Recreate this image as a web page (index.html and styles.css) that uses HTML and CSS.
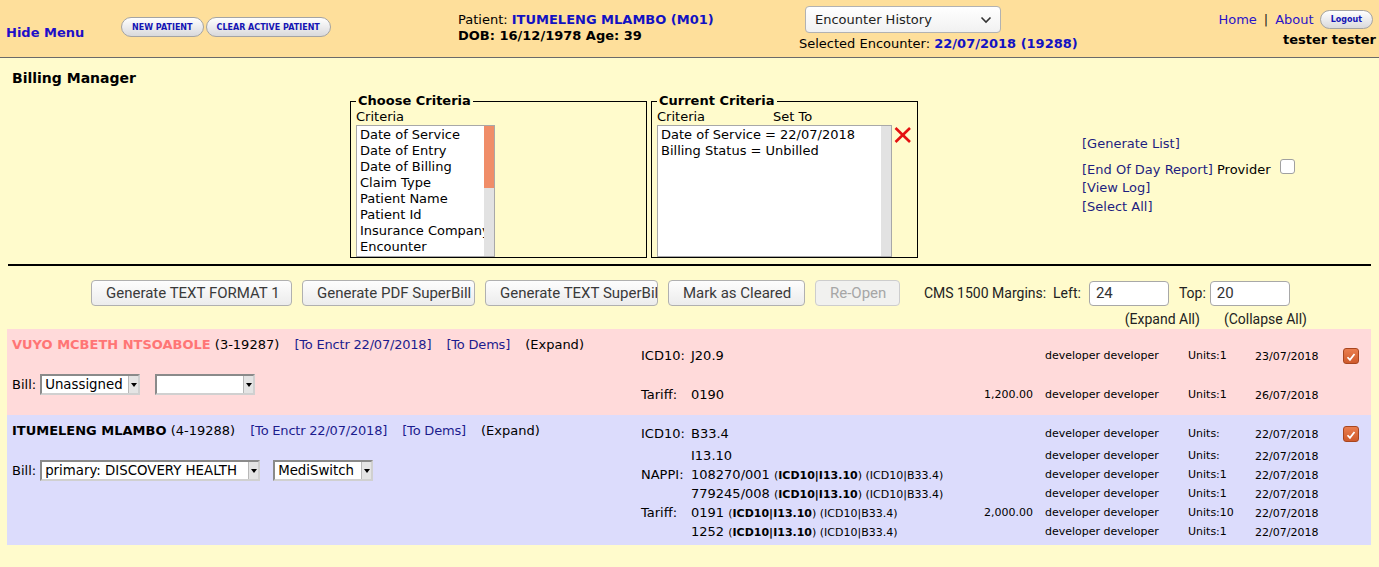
FILE: index.html
```html
<!DOCTYPE html>
<html lang="en">
<head>
    <meta charset="UTF-8">
    <meta name="viewport" content="width=device-width, initial-scale=1.0">
    <title>Billing Manager</title>
    <link rel="stylesheet" href="styles.css">
</head>
<body>
    <div class="topbar">
        <div class="hide-menu"><a href="#">Hide Menu</a></div>
        <div class="top-buttons">
            <button class="pill">NEW PATIENT</button>
            <button class="pill">CLEAR ACTIVE PATIENT</button>
        </div>
        <div class="patient-info">
            <div>Patient: <span class="patient-name">ITUMELENG MLAMBO (M01)</span></div>
            <div class="dob">DOB: 16/12/1978 Age: 39</div>
        </div>
        <div class="encounter">
            <div class="enc-select">
                <span>Encounter History</span>
                <svg width="12" height="8" viewBox="0 0 12 8"><polyline points="1.5,1.5 6,6 10.5,1.5" fill="none" stroke="#333" stroke-width="1.6"/></svg>
            </div>
            <div class="enc-selected">Selected Encounter: <span class="enc-id">22/07/2018 (19288)</span></div>
        </div>
        <div class="user">
            <div class="user-links">
                <a href="#">Home</a><span class="sep">|</span><a href="#">About</a>
                <button class="pill logout">Logout</button>
            </div>
            <div class="user-name">tester tester</div>
        </div>
    </div>

    <div class="title">Billing Manager</div>

    <div class="criteria">
        <fieldset class="choose">
            <legend>Choose Criteria</legend>
            <div class="label">Criteria</div>
            <div class="listbox">
                <div class="options">
                    <div>Date of Service</div>
                    <div>Date of Entry</div>
                    <div>Date of Billing</div>
                    <div>Claim Type</div>
                    <div>Patient Name</div>
                    <div>Patient Id</div>
                    <div>Insurance Company</div>
                    <div>Encounter</div>
                </div>
                <div class="scroll"><div class="thumb"></div></div>
            </div>
        </fieldset>
        <fieldset class="current">
            <legend>Current Criteria</legend>
            <div class="label labels"><span class="col-crit">Criteria</span><span>Set To</span></div>
            <div class="current-body">
                <div class="listbox wide">
                    <div class="options">
                        <div>Date of Service = 22/07/2018</div>
                        <div>Billing Status = Unbilled</div>
                    </div>
                    <div class="scroll"></div>
                </div>
                <svg class="remove" width="20" height="18" viewBox="0 0 20 18">
                    <line x1="2.5" y1="2" x2="17" y2="16" stroke="#e41010" stroke-width="2.6"/>
                    <line x1="17" y1="2" x2="2.5" y2="16" stroke="#e41010" stroke-width="2.6"/>
                </svg>
            </div>
        </fieldset>
        <div class="actions">
            <div class="gen"><a href="#">[Generate List]</a></div>
            <div><a href="#">[End Of Day Report]</a> Provider <span class="box"></span></div>
            <div><a href="#">[View Log]</a></div>
            <div><a href="#">[Select All]</a></div>
        </div>
    </div>

    <div class="rule"></div>

    <div class="toolbar">
        <button class="btn w1">Generate TEXT FORMAT 1</button>
        <button class="btn w2">Generate PDF SuperBill</button>
        <button class="btn w3">Generate TEXT SuperBill</button>
        <button class="btn w4">Mark as Cleared</button>
        <button class="btn w5" disabled>Re-Open</button>
        <span class="margins">CMS 1500 Margins:&nbsp; Left:</span>
        <input class="num" type="text" value="24">
        <span class="margins top-label">Top:</span>
        <input class="num num-top" type="text" value="20">
    </div>
    <div class="expand-links"><span>(Expand All)</span><span>(Collapse All)</span></div>

    <div class="claim pink">
        <div class="claim-left">
            <div class="claim-head">
                <span class="name unbilled">VUYO MCBETH NTSOABOLE</span> (3-19287)
                <a class="gap" href="#">[To Enctr 22/07/2018]</a>
                <a class="gap" href="#">[To Dems]</a>
                <span class="gap">(Expand)</span>
            </div>
            <div class="bill">
                Bill:
                <span class="sel s100"><span class="txt">Unassigned</span><span class="arr"></span></span>
                <span class="sel s100 second"><span class="txt"></span><span class="arr"></span></span>
            </div>
        </div>
        <div class="claim-right tall">
            <div class="line">
                <span class="lbl">ICD10:</span><span class="code">J20.9</span><span class="amt"></span>
                <span class="prov">developer developer</span><span class="units">Units:1</span><span class="date">23/07/2018</span>
                <span class="chk"><svg width="16" height="16" viewBox="0 0 16 16"><path d="M4 8.3 L6.8 11.2 L12 4.6" fill="none" stroke="#fff" stroke-width="2"/></svg></span>
            </div>
            <div class="line">
                <span class="lbl">Tariff:</span><span class="code">0190</span><span class="amt">1,200.00</span>
                <span class="prov">developer developer</span><span class="units">Units:1</span><span class="date">26/07/2018</span>
                <span></span>
            </div>
        </div>
    </div>

    <div class="claim blue">
        <div class="claim-left">
            <div class="claim-head">
                <span class="name">ITUMELENG MLAMBO</span> (4-19288)
                <a class="gap" href="#">[To Enctr 22/07/2018]</a>
                <a class="gap" href="#">[To Dems]</a>
                <span class="gap">(Expand)</span>
            </div>
            <div class="bill">
                Bill:
                <span class="sel s220"><span class="txt">primary: DISCOVERY HEALTH</span><span class="arr"></span></span>
                <span class="sel s100 second wide-gap"><span class="txt">MediSwitch</span><span class="arr"></span></span>
            </div>
        </div>
        <div class="claim-right">
            <div class="line first">
                <span class="lbl">ICD10:</span><span class="code">B33.4</span><span class="amt"></span>
                <span class="prov">developer developer</span><span class="units">Units:</span><span class="date">22/07/2018</span>
                <span class="chk"><svg width="16" height="16" viewBox="0 0 16 16"><path d="M4 8.3 L6.8 11.2 L12 4.6" fill="none" stroke="#fff" stroke-width="2"/></svg></span>
            </div>
            <div class="line">
                <span class="lbl"></span><span class="code">I13.10</span><span class="amt"></span>
                <span class="prov">developer developer</span><span class="units">Units:</span><span class="date">22/07/2018</span><span></span>
            </div>
            <div class="line">
                <span class="lbl">NAPPI:</span><span class="code">108270/001 <small>(<b>ICD10|I13.10</b>) (ICD10|B33.4)</small></span><span class="amt"></span>
                <span class="prov">developer developer</span><span class="units">Units:1</span><span class="date">22/07/2018</span><span></span>
            </div>
            <div class="line">
                <span class="lbl"></span><span class="code">779245/008 <small>(<b>ICD10|I13.10</b>) (ICD10|B33.4)</small></span><span class="amt"></span>
                <span class="prov">developer developer</span><span class="units">Units:1</span><span class="date">22/07/2018</span><span></span>
            </div>
            <div class="line">
                <span class="lbl">Tariff:</span><span class="code">0191 <small>(<b>ICD10|I13.10</b>) (ICD10|B33.4)</small></span><span class="amt">2,000.00</span>
                <span class="prov">developer developer</span><span class="units">Units:10</span><span class="date">22/07/2018</span><span></span>
            </div>
            <div class="line">
                <span class="lbl"></span><span class="code">1252 <small>(<b>ICD10|I13.10</b>) (ICD10|B33.4)</small></span><span class="amt"></span>
                <span class="prov">developer developer</span><span class="units">Units:1</span><span class="date">22/07/2018</span><span></span>
            </div>
        </div>
    </div>
</body>
</html>
```

FILE: styles.css
```css
body {
    margin: 0;
    background-color: #fffbcc;
    font-family: 'DejaVu Sans', sans-serif;
    font-size: 13px;
    color: #000;
}

a {
    text-decoration: none;
}

/* top bar */
.topbar {
    display: flex;
    align-items: flex-start;
    height: 57px;
    background-color: #fedf9b;
    border-bottom: 1px solid #6a6a6a;
    line-height: 16px;
}

.hide-menu {
    box-sizing: border-box;
    width: 121px;
    padding: 25px 0 0 6px;
    font-weight: bold;
}

.hide-menu a {
    color: #1f0fc8;
}

.top-buttons {
    width: 337px;
    padding-top: 17px;
    display: flex;
    gap: 2px;
}

.pill {
    height: 20px;
    padding: 0 10px;
    border: 1px solid #a4a4a4;
    border-radius: 10px;
    background: linear-gradient(#ffffff, #d9d9dc);
    font-family: 'DejaVu Sans', sans-serif;
    font-size: 8px;
    font-weight: bold;
    color: #1414b4;
    cursor: pointer;
}

.patient-info {
    width: 341px;
    padding-top: 12px;
}

.patient-name {
    font-weight: bold;
    color: #1212c2;
}

.dob {
    font-weight: bold;
}

.encounter {
    width: 202px;
    padding-top: 6px;
    white-space: nowrap;
}

.enc-select {
    box-sizing: border-box;
    margin-left: 6px;
    width: 196px;
    height: 27px;
    display: flex;
    align-items: center;
    justify-content: space-between;
    padding: 0 8px 0 9px;
    border: 1px solid #b2b2b2;
    border-radius: 4px;
    background: linear-gradient(#ffffff, #f1f1f1);
    color: #222;
}

.enc-selected {
    margin-top: 3px;
}

.enc-id {
    font-weight: bold;
    color: #1212c2;
}

.user {
    flex: 1;
    padding: 10px 3px 0 0;
    text-align: right;
}

.user-links {
    display: flex;
    justify-content: flex-end;
    align-items: center;
    height: 19px;
}

.user-links a {
    color: #2a14c8;
}

.sep {
    margin: 0 7px;
    color: #222;
}

.logout {
    height: 19px;
    margin: 0 3px 0 6px;
    padding: 0 10px;
}

.user-name {
    margin-top: 3px;
    font-weight: bold;
}

/* criteria */
.title {
    margin: 11px 0 0 12px;
    font-size: 14px;
    font-weight: bold;
    line-height: 18px;
}

.criteria {
    display: flex;
    align-items: flex-start;
    margin-top: 6px;
    padding-left: 350px;
    line-height: 16px;
}

fieldset {
    box-sizing: border-box;
    margin: 0;
    padding: 0 4px 0 5px;
    border: 1px solid #000;
}

legend {
    padding: 0 2px;
    font-weight: bold;
}

.choose {
    width: 297px;
}

.current {
    width: 267px;
    margin-left: 4px;
}

.labels {
    display: flex;
}

.col-crit {
    width: 116px;
}

.listbox {
    box-sizing: border-box;
    position: relative;
    width: 139px;
    height: 132px;
    border: 1px solid #a8a8a8;
    background: #fff;
    overflow: hidden;
}

.listbox.wide {
    width: 235px;
}

.options {
    padding: 1px 0 0 3px;
    white-space: nowrap;
}

.scroll {
    position: absolute;
    top: 0;
    right: 0;
    bottom: 0;
    width: 10px;
    background: #e2e2e2;
}

.thumb {
    height: 62px;
    background: #f08d68;
}

.current-body {
    display: flex;
    align-items: flex-start;
}

.remove {
    margin: 1px 0 0 1px;
}

.actions {
    margin-left: 164px;
    padding-top: 42px;
    line-height: 18.5px;
}

.actions a {
    color: #1e1e80;
}

.gen {
    margin-bottom: 7px;
}

.box {
    display: inline-block;
    box-sizing: border-box;
    width: 15px;
    height: 15px;
    margin: -2px 0 0 5px;
    vertical-align: top;
    border: 1px solid #a0a0a0;
    border-radius: 3px;
    background: #fff;
}

.rule {
    height: 2px;
    margin: 6px 8px 0;
    background: #000;
}

/* toolbar */
.toolbar {
    display: flex;
    align-items: center;
    gap: 10px;
    margin-top: 14px;
    padding-left: 91px;
    font-family: Roboto, 'Liberation Sans', sans-serif;
}

.btn {
    box-sizing: border-box;
    height: 26px;
    padding: 0 14px;
    border: 1px solid #b0b0b0;
    border-radius: 4px;
    background: linear-gradient(#fdfdfd, #ececec);
    font-family: Roboto, 'Liberation Sans', sans-serif;
    font-size: 15px;
    color: #3a3a3a;
    white-space: nowrap;
    overflow: hidden;
    text-align: left;
    cursor: pointer;
}

.btn:disabled {
    border-color: #cdcdcd;
    background: #f1f1ef;
    color: #a6a6a6;
    text-align: center;
}

.w1 { width: 201px; }
.w2 { width: 173px; }
.w3 { width: 173px; }
.w4 { width: 137px; text-align: center; }
.w5 { width: 85px; }

.margins {
    margin-left: 14px;
    font-size: 14px;
    color: #222;
}

.top-label {
    margin-left: 0;
}

.num {
    box-sizing: border-box;
    width: 80px;
    height: 25px;
    margin-left: -2px;
    padding: 0 6px;
    border: 1px solid #a8a8a8;
    border-radius: 4px;
    background: #fff;
    font-family: Roboto, 'Liberation Sans', sans-serif;
    font-size: 15px;
    color: #333;
}

.num-top {
    margin-left: -6px;
}

.expand-links {
    display: flex;
    justify-content: flex-end;
    gap: 24px;
    margin-top: 5px;
    padding-right: 72px;
    font-family: Roboto, 'Liberation Sans', sans-serif;
    font-size: 14px;
    line-height: 16px;
    color: #222;
}

/* claims */
.claim {
    display: flex;
    margin: 0 8px 0 7px;
}

.claim.pink {
    margin-top: 2px;
    background: #ffdada;
}

.claim.blue {
    background: #dcdcfc;
}

.claim-left {
    box-sizing: border-box;
    width: 634px;
    padding: 8px 0 0 5px;
}

.claim-head {
    line-height: 16px;
}

.claim-head a {
    color: #1c1c8e;
    letter-spacing: -0.2px;
}

.gap {
    margin-left: 11px;
}

.name {
    font-weight: bold;
}

.name.unbilled {
    color: #ff7575;
}

.bill {
    display: flex;
    align-items: center;
    margin-top: 21px;
    height: 21px;
}

.sel {
    box-sizing: border-box;
    display: inline-flex;
    height: 21px;
    margin-left: 4px;
    border: 2px solid;
    border-color: #8a8a8a #d0d0d0 #d0d0d0 #8a8a8a;
    background: #fff;
    font-size: 13.33px;
}

.sel.second {
    margin-left: 15px;
}

.sel.wide-gap {
    margin-left: 13px;
}

.s100 { width: 100px; }
.s220 { width: 220px; }

.sel .txt {
    flex: 1;
    padding-left: 3px;
    line-height: 17px;
    white-space: nowrap;
    overflow: hidden;
}

.sel .arr {
    position: relative;
    width: 9px;
    background: #e4e4e4;
    border-left: 1px solid #b8b8b8;
}

.sel .arr::after {
    content: '';
    position: absolute;
    left: 2px;
    top: 7px;
    border-left: 3px solid transparent;
    border-right: 3px solid transparent;
    border-top: 4px solid #000;
}

.claim-right {
    padding: 6px 0 4px;
}

.claim-right.tall {
    padding: 7px 0 1px;
}

.line {
    display: grid;
    grid-template-columns: 50px 270px 72px 155px 67px 88px 28px;
    align-items: center;
    height: 19px;
    white-space: nowrap;
}

.tall .line {
    height: 39px;
}

.line.first {
    height: 25px;
}

.code small {
    font-size: 11px;
}

.amt {
    text-align: right;
    font-size: 11px;
}

.prov {
    padding-left: 12px;
    font-size: 11px;
}

.units,
.date {
    font-size: 11px;
}

.date {
    padding-top: 2px;
}

.chk {
    display: inline-flex;
    box-sizing: border-box;
    width: 16px;
    height: 16px;
    border: 1px solid #a8461f;
    border-radius: 3px;
    background: linear-gradient(#ea7d4e, #cf5a2c);
}
```
